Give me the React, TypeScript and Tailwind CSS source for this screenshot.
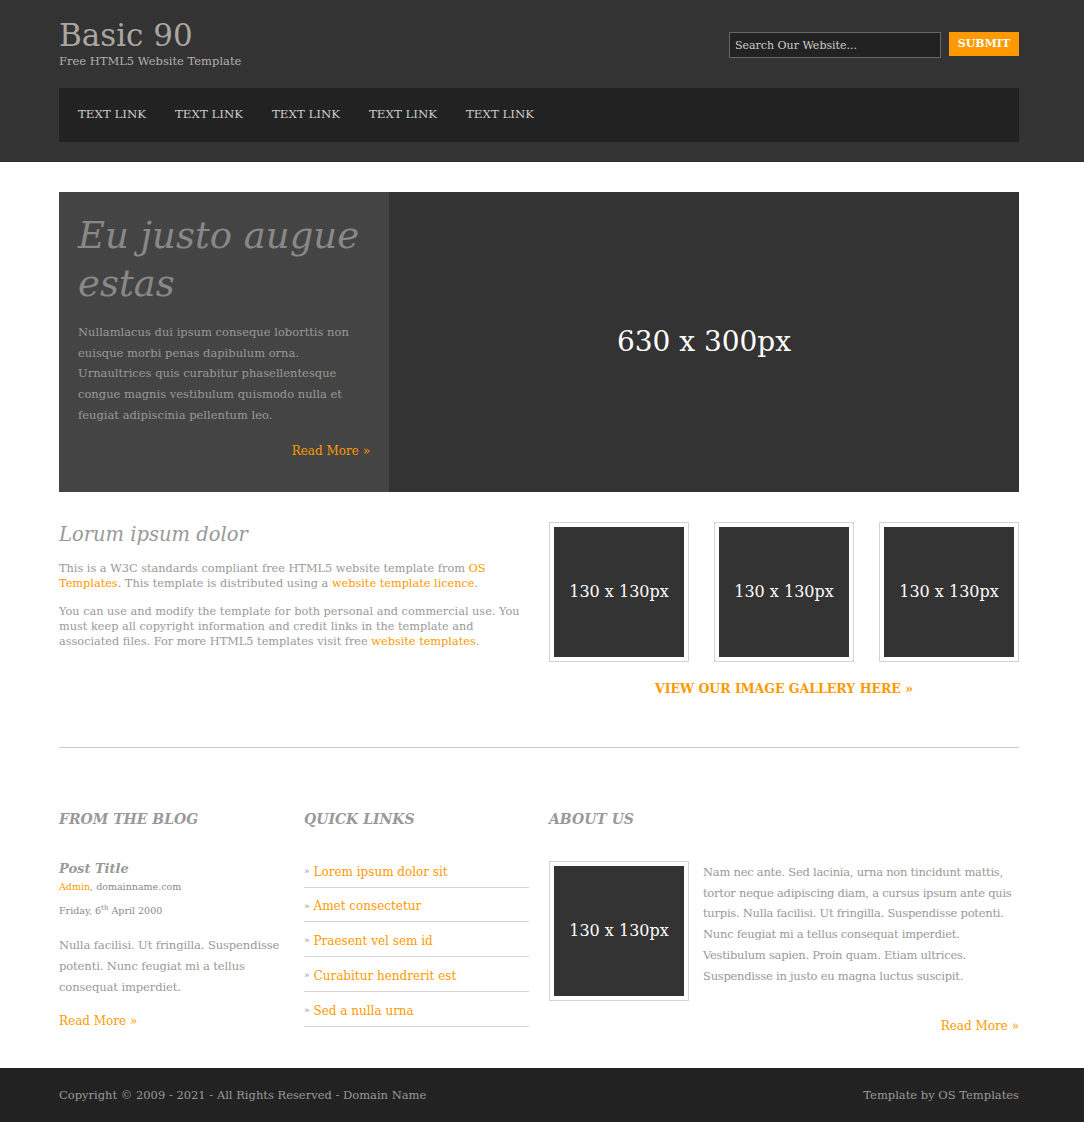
const serif = { fontFamily: '"DejaVu Serif", Georgia, serif' }

const links = ['TEXT LINK', 'TEXT LINK', 'TEXT LINK', 'TEXT LINK', 'TEXT LINK']
const quick = [
  'Lorem ipsum dolor sit',
  'Amet consectetur',
  'Praesent vel sem id',
  'Curabitur hendrerit est',
  'Sed a nulla urna',
]

function Placeholder() {
  return (
    <div className="w-[140px] h-[140px] border border-[#d4d4d4] p-[4px] shrink-0">
      <div className="w-full h-full bg-[#333] flex items-center justify-center text-white text-[16px]">
        130 x 130px
      </div>
    </div>
  )
}

export default function App() {
  return (
    <div className="min-h-[1122px] bg-white text-[#999]" style={serif}>
      {/* header */}
      <header className="bg-[#333]">
        <div className="w-[960px] ml-[59px] pt-[16px] pb-[20px]">
          <div className="flex justify-between items-start">
            <div>
              <h1 className="text-[31px] leading-[38px] text-[#aaa6a2]">Basic 90</h1>
              <p className="text-[11.5px] leading-[14px] text-[#b5b0ab]">Free HTML5 Website Template</p>
            </div>
            <form className="flex gap-[8px] mt-[16px]" onSubmit={(e) => e.preventDefault()}>
              <input
                className="w-[212px] h-[26px] bg-[#222] border border-[#666] px-[5px] text-[11px] text-[#ccc] placeholder:text-[#ccc] outline-none"
                placeholder="Search Our Website..."
              />
              <button className="w-[70px] h-[24px] bg-[#f90] text-white font-bold text-[11px]">SUBMIT</button>
            </form>
          </div>
          <nav className="mt-[20px] h-[54px] bg-[#222] flex items-center pl-[19px] gap-[28px]">
            {links.map((l, i) => (
              <a key={i} className="text-[11.8px] text-[#ccc] w-[69px] whitespace-nowrap">
                {l}
              </a>
            ))}
          </nav>
        </div>
      </header>

      <main className="w-[960px] ml-[59px]">
        {/* hero */}
        <section className="mt-[30px] flex h-[300px]">
          <div className="w-[330px] bg-[#444] px-[19px] pt-[20px]">
            <h2 className="italic text-[37px] leading-[48px] text-[#888]">Eu justo augue estas</h2>
            <p className="mt-[14px] text-[11.5px] leading-[20.7px] text-[#999]">
              Nullamlacus dui ipsum conseque loborttis non euisque morbi penas dapibulum orna. Urnaultrices quis
              curabitur phasellentesque congue magnis vestibulum quismodo nulla et feugiat adipiscinia pellentum leo.
            </p>
            <p className="mt-[16px] text-right text-[12px] text-[#f90]">Read More &raquo;</p>
          </div>
          <div className="flex-1 bg-[#333] flex items-center justify-center text-white text-[28px]">630 x 300px</div>
        </section>

        {/* intro + gallery */}
        <section className="mt-[30px] flex justify-between">
          <div className="w-[462px]">
            <h2 className="italic text-[19.5px] leading-[26px] text-[#999]">Lorum ipsum dolor</h2>
            <p className="mt-[13px] text-[11.3px] leading-[15px]">
              This is a W3C standards compliant free HTML5 website template from{' '}
              <a className="text-[#f90]">OS Templates</a>. This template is distributed using a{' '}
              <a className="text-[#f90]">website template licence</a>.
            </p>
            <p className="mt-[13px] text-[11.3px] leading-[15px]">
              You can use and modify the template for both personal and commercial use. You must keep all copyright
              information and credit links in the template and associated files. For more HTML5 templates visit free{' '}
              <a className="text-[#f90]">website templates</a>.
            </p>
          </div>
          <div className="w-[470px]">
            <div className="flex justify-between">
              <Placeholder />
              <Placeholder />
              <Placeholder />
            </div>
            <p className="mt-[18px] text-center font-bold text-[12.5px] text-[#f90]">VIEW OUR IMAGE GALLERY HERE &raquo;</p>
          </div>
        </section>

        <hr className="mt-[48px] border-0 border-t border-[#ccc]" />

        {/* bottom columns */}
        <section className="mt-[61px] flex pb-[31px]">
          <div className="w-[236px] mr-[9px]">
            <h3 className="italic font-bold text-[14px] leading-[20px] text-[#999]">FROM THE BLOG</h3>
            <h4 className="mt-[31px] italic font-bold text-[13px] leading-[18px] text-[#999]">Post Title</h4>
            <p className="mt-[2px] text-[9.5px] leading-[14px] text-[#888]">
              <a className="text-[#f90]">Admin</a>, domainname.com
            </p>
            <p className="mt-[10px] text-[9.5px] leading-[14px] text-[#888]">
              Friday, 6<sup className="text-[7px]">th</sup> April 2000
            </p>
            <p className="mt-[17px] text-[11.6px] leading-[21px] tracking-[-0.15px]">
              Nulla facilisi. Ut fringilla. Suspendisse potenti. Nunc feugiat mi a tellus consequat imperdiet.
            </p>
            <p className="mt-[13px] text-[12px] leading-[21px] text-[#f90]">Read More &raquo;</p>
          </div>

          <div className="w-[225px] mr-[20px]">
            <h3 className="italic font-bold text-[14px] leading-[20px] text-[#999]">QUICK LINKS</h3>
            <ul className="mt-[24px]">
              {quick.map((q) => (
                <li key={q} className="border-b border-[#d4d4d4] h-[34.8px] pt-[4px] flex items-center gap-[4px]">
                  <span className="text-[9px] text-[#999]">&raquo;</span>
                  <a className="text-[12px] text-[#f90]">{q}</a>
                </li>
              ))}
            </ul>
          </div>

          <div className="w-[470px]">
            <h3 className="italic font-bold text-[14px] leading-[20px] text-[#999]">ABOUT US</h3>
            <div className="mt-[32px] flex gap-[14px]">
              <Placeholder />
              <p className="text-[11.5px] leading-[20.8px] tracking-[-0.25px] mt-[1px]">
                Nam nec ante. Sed lacinia, urna non tincidunt mattis, tortor neque adipiscing diam, a cursus ipsum ante
                quis turpis. Nulla facilisi. Ut fringilla. Suspendisse potenti. Nunc feugiat mi a tellus consequat
                imperdiet. Vestibulum sapien. Proin quam. Etiam ultrices. Suspendisse in justo eu magna luctus suscipit.
              </p>
            </div>
            <p className="mt-[15px] text-right text-[12px] leading-[21px] text-[#f90]">Read More &raquo;</p>
          </div>
        </section>
      </main>

      <footer className="bg-[#222] h-[55px]">
        <div className="w-[960px] ml-[59px] h-full flex items-center justify-between text-[11.5px] text-[#999]">
          <p>Copyright &copy; 2009 - 2021 - All Rights Reserved - Domain Name</p>
          <p>Template by OS Templates</p>
        </div>
      </footer>
    </div>
  )
}
